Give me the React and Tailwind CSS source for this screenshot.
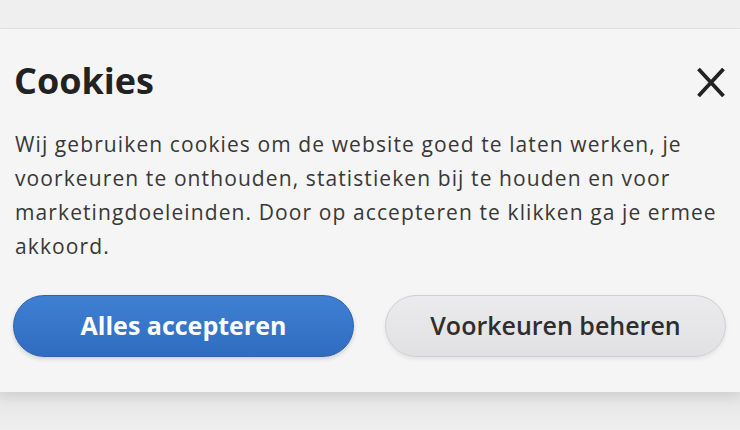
import React from 'react';

const font = { fontFamily: '"Open Sans", "Noto Sans", sans-serif' };

const CloseIcon = () => (
	<svg width="30" height="29" viewBox="0 0 30 29" fill="none" stroke="#222" strokeWidth="3.8" strokeLinecap="butt">
		<path d="M2.5 1 27.5 28M27.5 1 2.5 28" />
	</svg>
);

export default function App() {
	return (
		<div className="h-[430px] w-[740px] overflow-hidden bg-[#ececec] flex flex-col" style={font}>
			<div className="h-[29px] bg-[#efefef] border-b border-[#e2e2e2]"></div>
			<div className="bg-[#f5f5f5] pt-[30px] pl-[13px] pr-[14px] pb-[35px] shadow-[0_6px_10px_rgba(0,0,0,0.08)] relative">
				<div className="flex items-center justify-between pl-[1px]">
					<h1 className="text-[36px] leading-[44px] font-bold text-[#222]">Cookies</h1>
					<button className="mr-[0px] mt-[2px]">
						<CloseIcon />
					</button>
				</div>
				<p className="mt-[24px] pl-[2px] text-[21px] leading-[34px] tracking-[1.1px] text-[#383838] max-w-[712px]">
					Wij gebruiken cookies om de website goed te laten werken, je voorkeuren te onthouden, statistieken bij te houden en voor marketingdoeleinden. Door op accepteren te klikken ga je ermee akkoord.
				</p>
				<div className="mt-[32px] grid grid-cols-2 gap-[31px]">
					<button className="h-[62px] rounded-full bg-gradient-to-b from-[#3f80d2] to-[#306cc0] border border-[#2d63b0] text-white text-[25px] font-bold shadow-[0_2px_4px_rgba(0,0,0,0.15)]">
						Alles accepteren
					</button>
					<button className="h-[62px] rounded-full bg-gradient-to-b from-[#ebebed] to-[#e1e1e4] border border-[#cfcfd3] text-[#2e2e2e] text-[25px] font-semibold shadow-[0_2px_4px_rgba(0,0,0,0.08)]">
						Voorkeuren beheren
					</button>
				</div>
			</div>
			<div className="flex-1 bg-gradient-to-b from-[#e4e4e4] to-[#efefef]"></div>
		</div>
	);
}
